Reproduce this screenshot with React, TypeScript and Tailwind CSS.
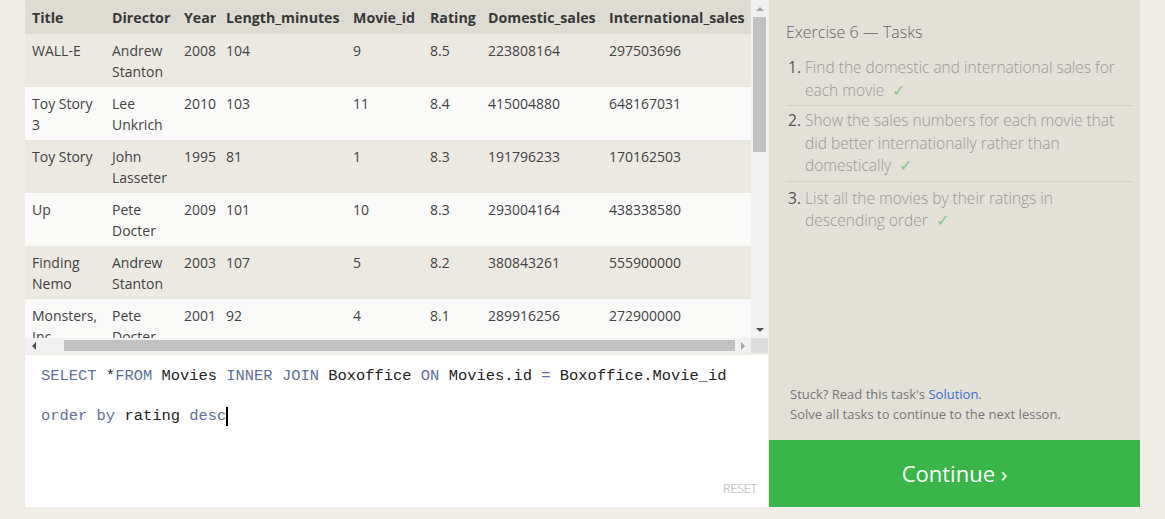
import React from 'react';

const rows = [
  ['WALL-E', 'Andrew Stanton', '2008', '104', '9', '8.5', '223808164', '297503696'],
  ['Toy Story 3', 'Lee Unkrich', '2010', '103', '11', '8.4', '415004880', '648167031'],
  ['Toy Story', 'John Lasseter', '1995', '81', '1', '8.3', '191796233', '170162503'],
  ['Up', 'Pete Docter', '2009', '101', '10', '8.3', '293004164', '438338580'],
  ['Finding Nemo', 'Andrew Stanton', '2003', '107', '5', '8.2', '380843261', '555900000'],
  ['Monsters, Inc.', 'Pete Docter', '2001', '92', '4', '8.1', '289916256', '272900000'],
];

const headers = ['Title', 'Director', 'Year', 'Length_minutes', 'Movie_id', 'Rating', 'Domestic_sales', 'International_sales'];
const widths = [80, 72, 42, 127, 77, 58, 121, 149];

const tasks = [
  'Find the domestic and international sales for each movie',
  'Show the sales numbers for each movie that did better internationally rather than domestically',
  'List all the movies by their ratings in descending order',
];

function Check() {
  return <span className="ml-2 text-[#8cc88c]">✓</span>;
}

export default function App() {
  return (
    <div
      className="flex h-[519px] w-full bg-[#efede6] pl-[25px]"
      style={{ fontFamily: '"Open Sans", "Liberation Sans", sans-serif' }}
    >
      {/* left: results + editor */}
      <div className="flex w-[743px] flex-col">
        <div className="flex h-[338px]">
          <div className="h-[338px] w-[726px] overflow-hidden">
            <table className="w-[726px] table-fixed border-collapse text-[14px] leading-[21px] text-[#444]">
              <colgroup>
                {widths.map((w, i) => (
                  <col key={i} style={{ width: w }} />
                ))}
              </colgroup>
              <thead>
                <tr className="h-[34px] bg-[#dddbd2]">
                  {headers.map((h) => (
                    <th key={h} className="whitespace-nowrap pl-[7px] pt-[1px] text-left text-[14.2px] font-bold text-[#383838]">
                      {h}
                    </th>
                  ))}
                </tr>
              </thead>
              <tbody>
                {rows.map((r, i) => (
                  <tr key={i} className={i % 2 === 0 ? 'h-[53px] bg-[#ebe9e2]' : 'h-[53px] bg-[#f9f9f8]'}>
                    {r.map((c, j) => (
                      <td key={j} className="pl-[7px] pr-1 pt-[6px] pb-[5px] align-top">
                        {c}
                      </td>
                    ))}
                  </tr>
                ))}
              </tbody>
            </table>
          </div>
          {/* vertical scrollbar */}
          <div className="flex w-[17px] flex-col items-center bg-[#f1f1f1]">
            <div className="flex h-[17px] items-center justify-center">
              <div className="h-0 w-0 border-x-[4px] border-b-[4px] border-x-transparent border-b-[#a3a3a3]" />
            </div>
            <div className="h-[135px] w-[13px] bg-[#c1c1c1]" />
            <div className="flex-1" />
            <div className="flex h-[17px] items-center justify-center">
              <div className="h-0 w-0 border-x-[4px] border-t-[4px] border-x-transparent border-t-[#505050]" />
            </div>
          </div>
        </div>
        {/* horizontal scrollbar */}
        <div className="flex h-[15px]">
          <div className="flex w-[726px] items-center bg-[#f1f1f1]">
            <div className="flex w-[17px] items-center justify-center">
              <div className="h-0 w-0 border-y-[4px] border-r-[4px] border-y-transparent border-r-[#505050]" />
            </div>
            <div className="ml-[22px] h-[11px] w-[671px] bg-[#c1c1c1]" />
            <div className="flex flex-1 items-center justify-center">
              <div className="h-0 w-0 border-y-[4px] border-l-[4px] border-y-transparent border-l-[#a3a3a3]" />
            </div>
          </div>
          <div className="w-[17px] bg-[#dcdcdc]" />
        </div>
        {/* editor */}
        <div className="relative mt-[2px] h-[152px] bg-white pl-4 pt-[11px]">
          <div
            className="text-[15.45px] leading-[20px] text-[#222]"
            style={{ fontFamily: '"Liberation Mono", "DejaVu Sans Mono", monospace' }}
          >
            <div>
              <span className="text-[#5f719b]">SELECT</span> *<span className="text-[#5f719b]">FROM</span> Movies{' '}
              <span className="text-[#5f719b]">INNER JOIN</span> Boxoffice <span className="text-[#5f719b]">ON</span>{' '}
              Movies.id <span className="text-[#5f719b]">=</span> Boxoffice.Movie_id
            </div>
            <div>&nbsp;</div>
            <div className="flex items-center">
              <span className="text-[#5f719b]">order by</span>&nbsp;rating&nbsp;<span className="text-[#5f719b]">desc</span>
              <span className="inline-block h-[19px] w-[2px] bg-black" />
            </div>
          </div>
          <div className="absolute bottom-[9px] right-[11px] text-[13px] tracking-[-0.5px] text-[#c8c8c8]">RESET</div>
        </div>
      </div>

      {/* right: tasks */}
      <div className="ml-px flex w-[371px] flex-col">
        <div className="flex h-[440px] flex-col bg-[#e3e0d7] pl-[17px] pr-[7px] pt-[20px]">
          <div className="text-[16px] font-light leading-[24px] text-[#666]">Exercise 6 — Tasks</div>
          <ol className="mt-[9px] text-[15.5px] font-light leading-[22.5px] text-[#9a9a9a]">
            {tasks.map((t, i) => (
              <li
                key={i}
                className={
                  i < tasks.length - 1
                    ? 'flex border-b border-[#d3d0c6] pb-[4px] pt-[3px]'
                    : 'flex pt-[5px]'
                }
              >
                <span className="w-[19px] shrink-0 pl-[2px] font-normal text-[#555]">{i + 1}.</span>
                <span>
                  {t}
                  <Check />
                </span>
              </li>
            ))}
          </ol>
          <div className="flex-1" />
          <div className="pb-[16px] pl-[4px] text-[13px] leading-[20px] text-[#777]">
            <div>
              Stuck? Read this task's <span className="text-[#3b6fd1]">Solution</span>.
            </div>
            <div>Solve all tasks to continue to the next lesson.</div>
          </div>
        </div>
        <div className="flex h-[67px] items-center justify-center bg-[#39b54a] text-[22px] text-white">
          Continue ›
        </div>
      </div>
    </div>
  );
}
